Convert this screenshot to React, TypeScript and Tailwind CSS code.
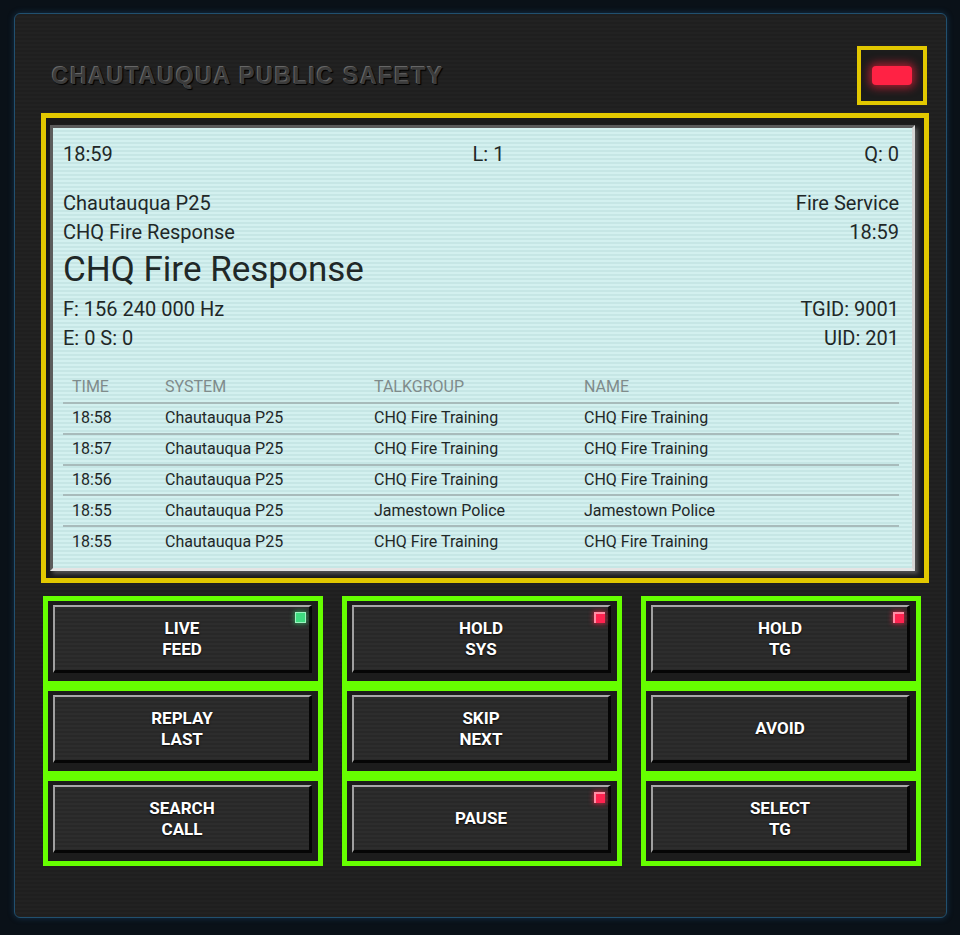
import React from 'react';

type Led = 'green' | 'red';

interface ScanButton {
  label: string[];
  led?: Led;
}

const history = [
  ['18:58', 'Chautauqua P25', 'CHQ Fire Training', 'CHQ Fire Training'],
  ['18:57', 'Chautauqua P25', 'CHQ Fire Training', 'CHQ Fire Training'],
  ['18:56', 'Chautauqua P25', 'CHQ Fire Training', 'CHQ Fire Training'],
  ['18:55', 'Chautauqua P25', 'Jamestown Police', 'Jamestown Police'],
  ['18:55', 'Chautauqua P25', 'CHQ Fire Training', 'CHQ Fire Training'],
];

const columns: ScanButton[][] = [
  [{ label: ['LIVE', 'FEED'], led: 'green' }, { label: ['REPLAY', 'LAST'] }, { label: ['SEARCH', 'CALL'] }],
  [{ label: ['HOLD', 'SYS'], led: 'red' }, { label: ['SKIP', 'NEXT'] }, { label: ['PAUSE'], led: 'red' }],
  [{ label: ['HOLD', 'TG'], led: 'red' }, { label: ['AVOID'] }, { label: ['SELECT', 'TG'] }],
];

const LedDot: React.FC<{ color: Led }> = ({ color }) =>
  color === 'green' ? (
    <span className="absolute right-[3px] top-[5px] h-[11px] w-[11px] border border-[#9af5c0] bg-[#3fdc80] shadow-[0_0_5px_1px_rgba(60,220,120,0.55)]" />
  ) : (
    <span className="absolute right-[3px] top-[5px] h-[11px] w-[11px] border-l-2 border-t-2 border-[#ff8ca4] bg-[#ff2350] shadow-[0_0_5px_1px_rgba(255,30,70,0.65)]" />
  );

const PanelButton: React.FC<{ btn: ScanButton }> = ({ btn }) => (
  <div className="h-[90px] border-[5px] border-[#66ff00] bg-[#1c1c1c] pl-[5px] pr-[6px] pt-[4px]">
    <button className="relative flex h-[68px] w-full flex-col items-center justify-center border-2 border-b-[3px] border-r-[3px] border-b-[#050505] border-l-[#a0a0a0] border-r-[#050505] border-t-[#a8a8a8] bg-[repeating-linear-gradient(180deg,#2d2d2d_0px,#2d2d2d_2px,#282828_2px,#282828_4px)] font-['Roboto',sans-serif] text-[17px] font-bold leading-[21px] text-white [text-shadow:0_1px_2px_rgba(0,0,0,0.95)]">
      {btn.label.map((l) => (
        <span key={l}>{l}</span>
      ))}
      {btn.led && <LedDot color={btn.led} />}
    </button>
  </div>
);

export default function App() {
  return (
    <div className="min-h-screen bg-[#0a1118] pl-[14px] pt-[13px]">
      <div className="h-[905px] w-[933px] rounded-[6px] border border-[#21506f] bg-[repeating-linear-gradient(180deg,#1f1f1f_0px,#1f1f1f_2px,#222222_2px,#222222_4px)] shadow-[0_0_6px_rgba(40,110,170,0.35)]">
        {/* header */}
        <div className="flex h-[99px] items-center justify-between pb-[8px] pl-[37px] pr-[19px] pt-[32px]">
          <h1 className="font-['Liberation_Sans',Arial,sans-serif] text-[23px] font-bold leading-[28px] tracking-[1.7px] text-[#3b3b3b] [text-shadow:-1px_-1px_0_#666666,1px_1px_1px_#000000]">
            CHAUTAUQUA PUBLIC SAFETY
          </h1>
          <div className="flex h-[59px] w-[70px] items-center justify-center border-4 border-[#e2c800] bg-[#1c1c1c]">
            <div className="h-[19px] w-[40px] rounded-[4px] bg-[#ff2244] shadow-[0_0_8px_3px_rgba(255,30,60,0.6)]" />
          </div>
        </div>

        {/* display */}
        <div className="ml-[26px] h-[470px] w-[888px] border-[5px] border-[#e2c800] bg-[#1a1a1a] pb-[7px] pl-[4px] pr-[9px] pt-[7px]">
          <div className="flex h-full flex-col border-[3px] border-b-[#e4e4e4] border-l-[#5c5c5c] border-r-[#d6d6d6] border-t-[#5a5a5a] bg-[repeating-linear-gradient(180deg,#d3f0ef_0px,#d3f0ef_2px,#c6e6e5_2px,#c6e6e5_4px)] pl-[10px] pr-[13px] pt-[11px] font-['Roboto',sans-serif] text-[#1f2828] shadow-[3px_3px_4px_rgba(140,140,140,0.5)]">
            <div className="flex h-[29px] items-center justify-between text-[20px]">
              <span>18:59</span>
              <span>L: 1</span>
              <span>Q: 0</span>
            </div>
            <div className="mt-[20px] flex h-[29px] items-center justify-between text-[20px]">
              <span>Chautauqua P25</span>
              <span>Fire Service</span>
            </div>
            <div className="flex h-[29px] items-center justify-between text-[20px]">
              <span>CHQ Fire Response</span>
              <span>18:59</span>
            </div>
            <div className="flex h-[48px] items-center text-[35px]">CHQ Fire Response</div>
            <div className="flex h-[29px] items-center justify-between text-[20px]">
              <span>F: 156 240 000 Hz</span>
              <span>TGID: 9001</span>
            </div>
            <div className="flex h-[29px] items-center justify-between text-[20px]">
              <span>E: 0 S: 0</span>
              <span>UID: 201</span>
            </div>

            <table className="mt-[20px] w-full table-fixed border-collapse text-left text-[16px]">
              <colgroup>
                <col className="w-[93px]" />
                <col className="w-[209px]" />
                <col className="w-[210px]" />
                <col />
              </colgroup>
              <thead>
                <tr className="h-[31px] text-[#7f8b8b]">
                  <th className="pl-[9px] font-normal">TIME</th>
                  <th className="pl-[9px] font-normal">SYSTEM</th>
                  <th className="pl-[9px] font-normal">TALKGROUP</th>
                  <th className="pl-[9px] font-normal">NAME</th>
                </tr>
              </thead>
              <tbody>
                {history.map((row, i) => (
                  <tr key={i} className="h-[30.75px] border-t-2 border-[#a8bbbb]">
                    {row.map((cell, j) => (
                      <td key={j} className="pl-[9px]">
                        {cell}
                      </td>
                    ))}
                  </tr>
                ))}
              </tbody>
            </table>
          </div>
        </div>

        {/* controls */}
        <div className="ml-[28px] mt-[13px] grid w-[878px] grid-cols-3 gap-x-[19px]">
          {columns.map((col, ci) => (
            <div key={ci} className="flex flex-col">
              {col.map((btn) => (
                <PanelButton key={btn.label.join(' ')} btn={btn} />
              ))}
            </div>
          ))}
        </div>
      </div>
    </div>
  );
}
